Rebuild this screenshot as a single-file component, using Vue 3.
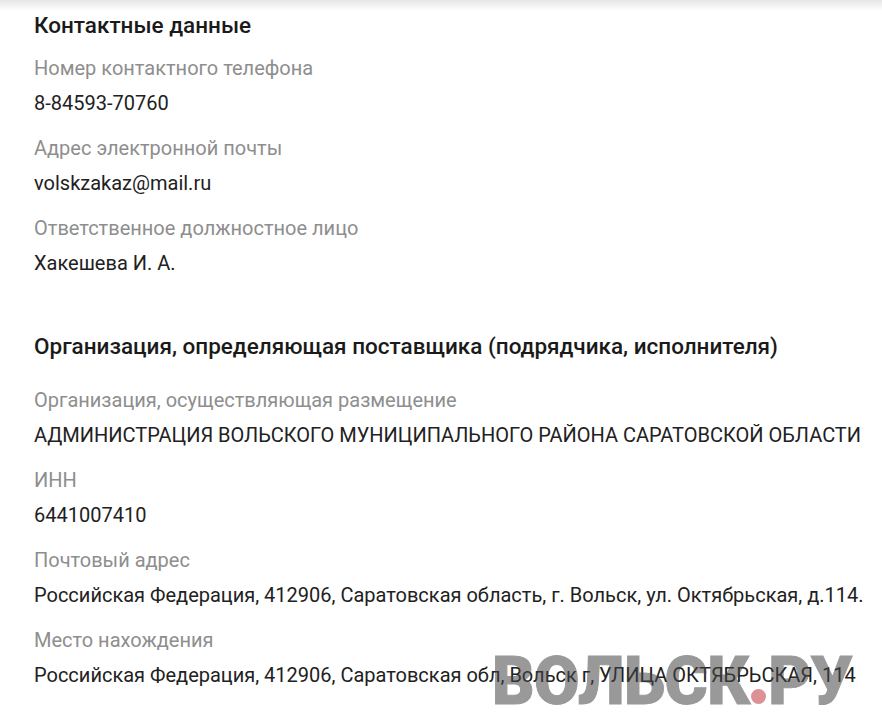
<script setup>
const contacts = [
  { label: 'Номер контактного телефона', value: '8-84593-70760' },
  { label: 'Адрес электронной почты', value: 'volskzakaz@mail.ru' },
  { label: 'Ответственное должностное лицо', value: 'Хакешева И. А.' }
]
const org = [
  { label: 'Организация, осуществляющая размещение', value: 'АДМИНИСТРАЦИЯ ВОЛЬСКОГО МУНИЦИПАЛЬНОГО РАЙОНА САРАТОВСКОЙ ОБЛАСТИ' },
  { label: 'ИНН', value: '6441007410' },
  { label: 'Почтовый адрес', value: 'Российская Федерация, 412906, Саратовская область, г. Вольск, ул. Октябрьская, д.114.' },
  { label: 'Место нахождения', value: 'Российская Федерация, 412906, Саратовская обл, Вольск г, УЛИЦА ОКТЯБРЬСКАЯ, 114' }
]
</script>

<template>
  <div class="page">
    <section class="first">
      <h2>Контактные данные</h2>
      <div v-for="f in contacts" :key="f.label" class="field">
        <div class="label">{{ f.label }}</div>
        <div class="value">{{ f.value }}</div>
      </div>
    </section>
    <section class="second">
      <h2>Организация, определяющая поставщика (подрядчика, исполнителя)</h2>
      <div v-for="f in org" :key="f.label" class="field">
        <div class="label">{{ f.label }}</div>
        <div class="value">{{ f.value }}</div>
      </div>
    </section>
    <div class="mark">ВОЛЬСК<span class="dot"></span>РУ</div>
  </div>
</template>

<style>
html, body { margin: 0; background: #fff; }
</style>

<style scoped>
.page {
  position: relative;
  width: 882px;
  height: 713px;
  overflow: hidden;
  box-sizing: border-box;
  padding: 11px 0 0 34px;
  font-family: Roboto, sans-serif;
  background: #fff;
  white-space: nowrap;
}
.page::before {
  content: '';
  position: absolute;
  left: 0; right: 0; top: 0;
  height: 11px;
  background: linear-gradient(#e6e6e6, #fff);
}
h2 {
  position: relative;
  margin: 0;
  font-size: 22.5px;
  line-height: 28px;
  font-weight: 500;
  color: #1a1a1a;
}
.first h2 { margin-bottom: 13px; }
.second { margin-top: 40px; }
.second h2 { margin-bottom: 24px; }
.field { height: 80px; }
.label { font-size: 20px; line-height: 26px; color: #8e8e8e; padding-top: 3px; }
.value { font-size: 20px; line-height: 26px; color: #212121; padding-top: 9px; }
.mark {
  position: absolute;
  left: 492px;
  top: 647px;
  display: flex;
  align-items: baseline;
  font-family: Roboto, sans-serif;
  font-weight: 900;
  font-size: 66px;
  line-height: 70px;
  color: #464646;
  opacity: 0.55;
  letter-spacing: -0.6px;
  -webkit-text-stroke: 1px #464646;
}
.dot {
  width: 15px;
  height: 15px;
  margin: 0 2px;
  border-radius: 50%;
  background: #c1393e;
}
</style>
